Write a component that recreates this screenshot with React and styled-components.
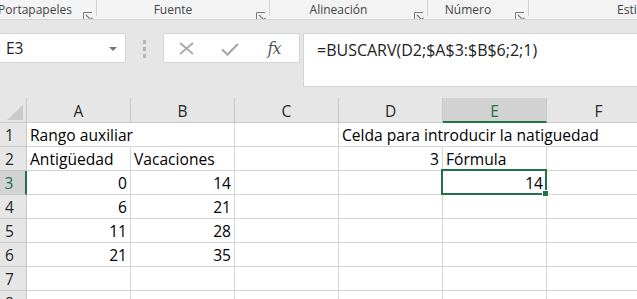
import React from 'react';
import styled, { createGlobalStyle } from 'styled-components';

const Global = createGlobalStyle`
  html, body { margin: 0; padding: 0; background: #e6e6e6; overflow: hidden; }
  body { font-family: "Open Sans", "Liberation Sans", sans-serif; }
  #root { width: 637px; height: 299px; overflow: hidden; }
`;

const GREEN = '#217346';
const GRID = '#d4d4d4';
const HEAD_LINE = '#c8c8c8';

const Page = styled.div`
  display: flex;
  flex-direction: column;
  width: 637px;
  height: 299px;
  overflow: hidden;
`;

/* ---------- Ribbon group labels ---------- */
const Ribbon = styled.div`
  display: flex;
  flex-shrink: 0;
  height: 19px;
  background: #f3f3f3;
  border-bottom: 1px solid #d5d5d5;
  white-space: nowrap;
  overflow: hidden;
`;

const Group = styled.div`
  display: flex;
  flex: 0 0 ${p => p.$w}px;
  margin-left: ${p => p.$ml || 0}px;
`;

const GroupLabel = styled.div`
  flex: 1;
  text-align: ${p => (p.$pl ? 'left' : 'center')};
  padding-left: ${p => p.$pl || 0}px;
  padding-top: 1px;
  font-size: 12px;
  line-height: 18px;
  color: #444;
`;

const Launcher = styled.div`
  width: 20px;
  box-sizing: border-box;
  padding: 5px 0 0 7px;
`;

const GroupSep = styled.div`
  flex: 0 0 1px;
  height: 16px;
  background: #d2d2d2;
`;

const LauncherIcon = () => (
  <svg width="10" height="10" viewBox="0 0 10 10">
    <path d="M0.5 9 V0.5 H9" fill="none" stroke="#7a7a7a" strokeWidth="1" />
    <path d="M3 3 L8 8" fill="none" stroke="#7a7a7a" strokeWidth="1.2" />
    <path d="M5 9.5 H9.5 V5 Z" fill="#7a7a7a" />
  </svg>
);

/* ---------- Formula bar ---------- */
const FormulaArea = styled.div`
  display: flex;
  align-items: flex-start;
  flex-shrink: 0;
  height: 78px;
  box-sizing: border-box;
  padding-top: 13px;
`;

const NameBox = styled.div`
  flex: 0 0 126px;
  height: 30px;
  box-sizing: border-box;
  background: #fff;
  border: 1px solid ${GRID};
  border-left: none;
  display: flex;
  align-items: center;
  justify-content: space-between;
  padding: 0 8px 0 6px;
  font-size: 15.5px;
  color: #222;
`;

const DropArrow = styled.span`
  width: 0;
  height: 0;
  border-left: 4px solid transparent;
  border-right: 4px solid transparent;
  border-top: 4px solid #777;
  margin-top: 1px;
`;

const Grip = styled.div`
  flex: 0 0 37px;
  display: flex;
  flex-direction: column;
  align-items: center;
  gap: 3px;
  padding-top: 7px;
`;

const GripDot = styled.span`
  width: 3px;
  height: 4px;
  background: #b4b4b4;
`;

const ButtonsBox = styled.div`
  flex: 0 0 137px;
  height: 30px;
  box-sizing: border-box;
  background: #fff;
  border: 1px solid ${GRID};
  display: flex;
  align-items: center;
`;

const FxButton = styled.div`
  flex: 0 0 44px;
  display: flex;
  justify-content: center;
  align-items: center;
  height: 100%;
  margin-top: ${p => p.$dy || 0}px;
`;

const FxText = styled.span`
  font-family: "DejaVu Serif", "Liberation Serif", serif;
  font-style: italic;
  font-size: 16px;
  color: #555;
  letter-spacing: -1px;
`;

const FormulaInput = styled.div`
  flex: 1;
  margin-left: 3px;
  height: 54px;
  box-sizing: border-box;
  background: #fff;
  border: 1px solid ${GRID};
  border-right: none;
  padding: 6px 0 0 13px;
  font-size: 16px;
  line-height: 20px;
  color: #222;
  white-space: nowrap;
`;

/* ---------- Sheet grid ---------- */
const Sheet = styled.div`
  display: grid;
  grid-template-columns: 27px repeat(6, 104px);
  grid-template-rows: 25px;
  grid-auto-rows: 24px;
  width: 651px;
  background: #fff;
  flex-shrink: 0;
`;

const Corner = styled.div`
  background: #e6e6e6;
  border-right: 1px solid ${HEAD_LINE};
  border-bottom: 1px solid ${HEAD_LINE};
  box-sizing: border-box;
  display: flex;
  align-items: flex-end;
  justify-content: flex-end;
  padding: 0 3px 2px 0;
`;

const ColHead = styled.div`
  box-sizing: border-box;
  background: ${p => (p.$sel ? '#d2d2d2' : '#e6e6e6')};
  border-right: 1px solid ${HEAD_LINE};
  border-bottom: ${p => (p.$sel ? `2px solid ${GREEN}` : `1px solid ${HEAD_LINE}`)};
  color: ${p => (p.$sel ? GREEN : '#262626')};
  text-align: center;
  font-size: 15.5px;
  line-height: 22px;
  padding-top: 2px;
  overflow: hidden;
`;

const RowHead = styled.div`
  box-sizing: border-box;
  background: ${p => (p.$sel ? '#d2d2d2' : '#e6e6e6')};
  border-right: ${p => (p.$sel ? `2px solid ${GREEN}` : `1px solid ${HEAD_LINE}`)};
  border-bottom: 1px solid ${HEAD_LINE};
  color: ${p => (p.$sel ? GREEN : '#262626')};
  display: flex;
  align-items: flex-end;
  justify-content: center;
  padding: 0 7px 1px 0;
  font-size: 15.5px;
  line-height: 20px;
`;

const Cell = styled.div`
  position: relative;
  box-sizing: border-box;
  border-right: 1px solid ${p => (p.$spill ? 'transparent' : GRID)};
  border-bottom: 1px solid ${GRID};
  display: flex;
  align-items: flex-end;
  justify-content: ${p => (p.$right ? 'flex-end' : 'flex-start')};
  padding: 0 3px 1px 3px;
  font-size: 15.6px;
  line-height: 20px;
  color: #000;
  white-space: nowrap;
  overflow: visible;
`;

const Selection = styled.div`
  position: absolute;
  left: -2px;
  top: -2px;
  right: -1px;
  bottom: -1px;
  border: 2px solid ${GREEN};
  pointer-events: none;
  z-index: 2;
`;

const FillHandle = styled.div`
  position: absolute;
  right: -4px;
  bottom: -4px;
  width: 5px;
  height: 5px;
  background: ${GREEN};
  border: 1px solid #fff;
`;

const COLS = ['A', 'B', 'C', 'D', 'E', 'F'];
const SEL_COL = 'E';
const SEL_ROW = 3;

// cells: key "A1" -> { v, right, spill }
const DATA = {
  A1: { v: 'Rango auxiliar', spill: true },
  D1: { v: 'Celda para introducir la natiguedad', spill: true },
  E1: { spill: true },
  A2: { v: 'Antigüedad' },
  B2: { v: 'Vacaciones' },
  D2: { v: '3', right: true },
  E2: { v: 'Fórmula' },
  A3: { v: '0', right: true },
  B3: { v: '14', right: true },
  E3: { v: '14', right: true },
  A4: { v: '6', right: true },
  B4: { v: '21', right: true },
  A5: { v: '11', right: true },
  B5: { v: '28', right: true },
  A6: { v: '21', right: true },
  B6: { v: '35', right: true },
};

const RIBBON = [
  { label: 'Portapapeles', w: 102, ml: -6, launcher: true },
  { label: 'Fuente', w: 172, launcher: true },
  { label: 'Alineación', w: 157, launcher: true },
  { label: 'Número', w: 100, launcher: true },
  { label: 'Estilos', w: 140, pl: 88 },
];

export default function App() {
  const rows = [1, 2, 3, 4, 5, 6, 7, 8];
  return (
    <Page>
      <Global />
      <Ribbon>
        {RIBBON.map((g, i) => (
          <React.Fragment key={g.label}>
            <Group $w={g.w} $ml={g.ml}>
              <GroupLabel $pl={g.pl}>{g.label}</GroupLabel>
              {g.launcher && (
                <Launcher>
                  <LauncherIcon />
                </Launcher>
              )}
            </Group>
            {i < RIBBON.length - 1 && <GroupSep />}
          </React.Fragment>
        ))}
      </Ribbon>

      <FormulaArea>
        <NameBox>
          <span>E3</span>
          <DropArrow />
        </NameBox>
        <Grip>
          <GripDot />
          <GripDot />
          <GripDot />
        </Grip>
        <ButtonsBox>
          <FxButton $dy={1}>
            <svg width="15" height="13" viewBox="0 0 15 13">
              <path d="M1 1 L14 12 M14 1 L1 12" stroke="#a8a8a8" strokeWidth="1.7" fill="none" />
            </svg>
          </FxButton>
          <FxButton $dy={2}>
            <svg width="18" height="13" viewBox="0 0 18 13">
              <path d="M1 6.5 L6.5 11.5 L17 1" stroke="#a8a8a8" strokeWidth="2.3" fill="none" />
            </svg>
          </FxButton>
          <FxButton>
            <FxText>fx</FxText>
          </FxButton>
        </ButtonsBox>
        <FormulaInput>=BUSCARV(D2;$A$3:$B$6;2;1)</FormulaInput>
      </FormulaArea>

      <Sheet>
        <Corner>
          <svg width="16" height="15" viewBox="0 0 16 15">
            <polygon points="0,15 16,15 16,0" fill="#cacaca" />
          </svg>
        </Corner>
        {COLS.map(c => (
          <ColHead key={c} $sel={c === SEL_COL}>{c}</ColHead>
        ))}
        {rows.map(r => (
          <React.Fragment key={r}>
            <RowHead $sel={r === SEL_ROW}>{r}</RowHead>
            {COLS.map(c => {
              const d = DATA[c + r] || {};
              const sel = c === SEL_COL && r === SEL_ROW;
              return (
                <Cell key={c} $right={d.right} $spill={d.spill}>
                  {d.v}
                  {sel && (
                    <Selection>
                      <FillHandle />
                    </Selection>
                  )}
                </Cell>
              );
            })}
          </React.Fragment>
        ))}
      </Sheet>
    </Page>
  );
}
